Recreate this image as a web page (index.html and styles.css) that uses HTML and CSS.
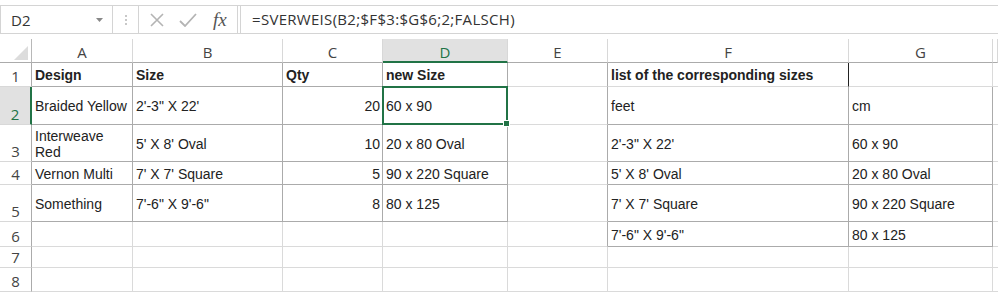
FILE: index.html
```html
<!DOCTYPE html>
<html lang="de">
<head>
<meta charset="UTF-8">
<title>Tabelle</title>
<link rel="stylesheet" href="styles.css">
</head>
<body>

<div class="formula-bar">
  <div class="name-box">
    <span>D2</span>
    <svg class="drop" width="7" height="4" viewBox="0 0 7 4"><path d="M0 0h7L3.5 4z" fill="#888"/></svg>
  </div>
  <div class="grip"><i></i><i></i><i></i></div>
  <div class="fx-buttons">
    <svg width="16" height="14" viewBox="0 0 16 14"><path d="M2 1l12 12M14 1L2 13" stroke="#b4b4b4" stroke-width="1.6" fill="none"/></svg>
    <svg width="18" height="14" viewBox="0 0 18 14"><path d="M1 8l5 5L17 1" stroke="#b4b4b4" stroke-width="1.8" fill="none"/></svg>
    <span class="fx">fx</span>
  </div>
  <div class="formula">=SVERWEIS(B2;$F$3:$G$6;2;FALSCH)</div>
</div>

<div class="sheet">
  <!-- column headers -->
  <div class="corner"><svg width="14" height="14" viewBox="0 0 14 14"><path d="M14 0v14H0z" fill="#dcdcdc"/></svg></div>
  <div class="hd">A</div>
  <div class="hd">B</div>
  <div class="hd">C</div>
  <div class="hd active">D</div>
  <div class="hd">E</div>
  <div class="hd">F</div>
  <div class="hd">G</div>
  <div class="hd"></div>

  <!-- row 1 -->
  <div class="rh">1</div>
  <div class="c bx b">Design</div>
  <div class="c bx b">Size</div>
  <div class="c bx b">Qty</div>
  <div class="c bx b">new Size</div>
  <div class="c edge"></div>
  <div class="c b dark-right">list of the corresponding sizes</div>
  <div class="c"></div>
  <div class="c"></div>

  <!-- row 2 -->
  <div class="rh active">2</div>
  <div class="c bx">Braided Yellow</div>
  <div class="c bx">2'-3" X 22'</div>
  <div class="c bx num">20</div>
  <div class="c bx sel">60 x 90</div>
  <div class="c edge"></div>
  <div class="c bx">feet</div>
  <div class="c bx">cm</div>
  <div class="c"></div>

  <!-- row 3 -->
  <div class="rh">3</div>
  <div class="c bx">Interweave<br>Red</div>
  <div class="c bx">5' X 8' Oval</div>
  <div class="c bx num">10</div>
  <div class="c bx">20 x 80 Oval</div>
  <div class="c edge"></div>
  <div class="c bx">2'-3" X 22'</div>
  <div class="c bx">60 x 90</div>
  <div class="c"></div>

  <!-- row 4 -->
  <div class="rh">4</div>
  <div class="c bx">Vernon Multi</div>
  <div class="c bx">7' X 7' Square</div>
  <div class="c bx num">5</div>
  <div class="c bx">90 x 220 Square</div>
  <div class="c edge"></div>
  <div class="c bx">5' X 8' Oval</div>
  <div class="c bx">20 x 80 Oval</div>
  <div class="c"></div>

  <!-- row 5 -->
  <div class="rh">5</div>
  <div class="c bx">Something</div>
  <div class="c bx">7'-6" X 9'-6"</div>
  <div class="c bx num">8</div>
  <div class="c bx">80 x 125</div>
  <div class="c edge"></div>
  <div class="c bx">7' X 7' Square</div>
  <div class="c bx">90 x 220 Square</div>
  <div class="c"></div>

  <!-- row 6 -->
  <div class="rh">6</div>
  <div class="c"></div>
  <div class="c"></div>
  <div class="c"></div>
  <div class="c"></div>
  <div class="c edge"></div>
  <div class="c bx">7'-6" X 9'-6"</div>
  <div class="c bx">80 x 125</div>
  <div class="c"></div>

  <!-- row 7 -->
  <div class="rh">7</div>
  <div class="c"></div>
  <div class="c"></div>
  <div class="c"></div>
  <div class="c"></div>
  <div class="c"></div>
  <div class="c"></div>
  <div class="c"></div>
  <div class="c"></div>

  <!-- row 8 -->
  <div class="rh">8</div>
  <div class="c"></div>
  <div class="c"></div>
  <div class="c"></div>
  <div class="c"></div>
  <div class="c"></div>
  <div class="c"></div>
  <div class="c"></div>
  <div class="c"></div>
</div>

</body>
</html>
```

FILE: styles.css
```css
* { margin: 0; padding: 0; box-sizing: border-box; }
body { background: #fff; color: #222; font-family: "Liberation Sans", Arial, sans-serif; font-size: 14px; overflow: hidden; }

/* formula bar */
.formula-bar { display: flex; height: 29px; margin-top: 5px; border-top: 1px solid #d4d4d4; border-bottom: 1px solid #d4d4d4; }
.name-box { width: 113px; display: flex; align-items: center; justify-content: space-between; padding: 0 9px 0 10px; border-right: 1px solid #d4d4d4; border-left: 1px solid #d4d4d4; font-family: "Open Sans", sans-serif; font-size: 15px; color: #333; }
.name-box .drop { margin-top: 1px; }
.grip { width: 25px; display: flex; flex-direction: column; align-items: center; justify-content: center; gap: 2px; }
.grip i { width: 2px; height: 2px; background: #c8c8c8; }
.fx-buttons { width: 100px; display: flex; align-items: center; gap: 14px; padding-left: 10px; border-left: 1px solid #d4d4d4; border-right: 1px solid #d4d4d4; }
.fx { font-family: "Liberation Serif", "Times New Roman", serif; font-style: italic; font-size: 19px; color: #555; margin-left: 2px; }
.formula { flex: 1; margin-left: 2px; border-left: 1px solid #d4d4d4; padding-left: 11px; line-height: 27px; font-family: "Open Sans", sans-serif; font-size: 15px; letter-spacing: 0.3px; color: #333; }

/* sheet grid */
.sheet { margin-top: 5px; display: grid; grid-template-columns: 32px 101px 150px 100px 125px 100px 241px 144px 5px; grid-template-rows: 24px 24px 38px 37px 23px 37px 25px 21px 24px; }
.corner { display: flex; align-items: flex-end; justify-content: flex-end; padding: 0 3px 2px 0; border-right: 1px solid #b8b8b8; border-bottom: 1px solid #ababab; }
.hd { display: flex; align-items: center; justify-content: center; padding-top: 3px; font-family: "Open Sans", sans-serif; font-size: 15px; color: #444; border-right: 1px solid #d8d8d8; border-bottom: 1px solid #ababab; }
.hd.active { background: #e1e1e1; color: #217346; border-bottom: 2px solid #217346; }
.rh { display: flex; align-items: flex-end; justify-content: center; font-family: "Open Sans", sans-serif; font-size: 15px; color: #444; border-right: 1px solid #ababab; border-bottom: 1px solid #d8d8d8; }
.rh.active { background: #e1e1e1; color: #217346; border-right: 2px solid #217346; }

.c { display: flex; align-items: center; padding: 1px 3px 0; line-height: 16px; white-space: nowrap; border-right: 1px solid #dadada; border-bottom: 1px solid #dadada; }
.c.bx { border-color: #ababab; }
.c.edge { border-right-color: #ababab; }
.c.dark-right { border-right-color: #222; }
.c.b { font-weight: bold; }
.c.num { justify-content: flex-end; padding-right: 2px; }

/* selected cell */
.sel { position: relative; }
.sel::before { content: ""; position: absolute; left: -1px; top: -1px; right: -1px; bottom: -1px; border: 2px solid #217346; }
.sel::after { content: ""; position: absolute; right: -3px; bottom: -3px; width: 5px; height: 5px; background: #217346; border: 1px solid #fff; }
```
